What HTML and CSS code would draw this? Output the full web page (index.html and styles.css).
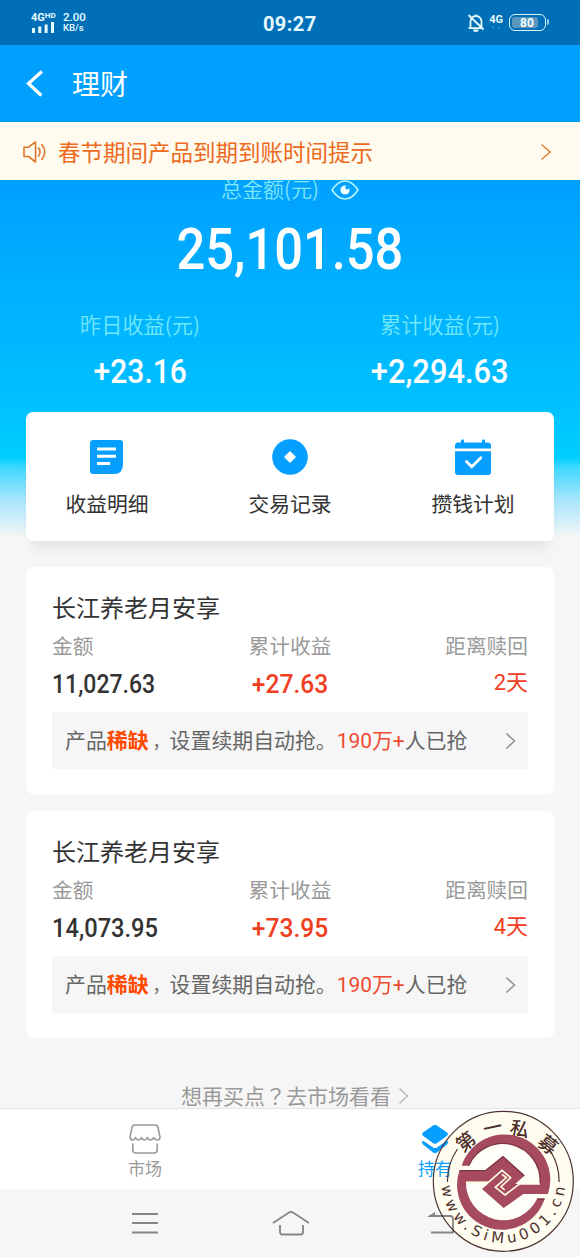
FILE: index.html
```html
<!DOCTYPE html>
<html lang="zh-CN">
<head>
<meta charset="utf-8">
<title>理财</title>
<link rel="stylesheet" href="styles.css">
</head>
<body>
<div class="screen">
  <div class="status">
    <div class="signal">
      <div class="net">4G<sup>HD</sup></div>
      <svg width="24" height="12" viewBox="0 0 24 12" fill="#e6fbff"><rect x="1" y="6" width="3" height="5"/><rect x="7.300" y="4.500" width="3" height="6.500"/><rect x="13.600" y="2.500" width="3" height="8.500"/><rect x="20" y="0" width="3" height="11"/></svg>
    </div>
    <div class="speed"><span>2.00</span><span class="unit">KB/s</span></div>
    <div class="clock">09:27</div>
    <div class="status-right">
      <svg width="18" height="20" viewBox="0 0 18 20" fill="none" stroke="#e6fbff" stroke-width="1.800"><path d="M3.500 15V8.500a5.500 5.500 0 0 1 11 0V15M1.500 15.200h14.500M8.700 3V1.500M1.500 2l15 14.500"/><path d="M6 16.500a2.800 2.500 0 0 0 5.600 0z" fill="#e6fbff" stroke="none"/></svg>
      <div class="net4g">4G<svg width="10" height="5" viewBox="0 0 10 5" fill="#0b94c4"><path d="M0 1h4l-2 3zM6 4h4l-2-3z"/></svg></div>
      <div class="battery"><div class="level">80</div></div>
    </div>
  </div>
  <div class="titlebar">
    <svg width="18" height="27" viewBox="0 0 18 27" fill="none" stroke="#fff" stroke-width="3.200"><path d="M15.800 1.500L2.500 13.500 15.300 25.500"/></svg>
    <h1>理财</h1>
  </div>
  <div class="notice">
    <svg width="24" height="22" viewBox="0 0 24 22" fill="none" stroke="#dc762b" stroke-width="1.600" stroke-linejoin="round"><path d="M1 6.200h4.500L12.500 1v20l-7-5.500H1zM15.500 7q3 4 0 8M18.800 3.500q6 7.500 0 15" stroke-linecap="round"/></svg>
    <span class="notice-text">春节期间产品到期到账时间提示</span>
    <svg width="12" height="18" viewBox="0 0 12 18" fill="none" stroke="#df863f" stroke-width="1.600"><path d="M1.500 1.500L10 9 1.500 16.500"/></svg>
  </div>
  <div class="hero">
    <div class="total-label"><span>总金额(元)</span>
      <svg width="28" height="20" viewBox="0 0 28 20"><path d="M1 10Q7 1 14 1t13 9Q21 19 14 19T1 10z" fill="none" stroke="#b2f4ff" stroke-width="1.600"/><circle cx="14" cy="10" r="4.600" fill="#f2ffff"/><circle cx="16.200" cy="7.500" r="1.900" fill="#03a5ff"/></svg>
    </div>
    <div class="total"><span>25,101.58</span></div>
    <div class="gains">
      <div class="gain"><div class="gain-label">昨日收益(元)</div><div class="gain-value"><span>+23.16</span></div></div>
      <div class="gain right"><div class="gain-label">累计收益(元)</div><div class="gain-value"><span>+2,294.63</span></div></div>
    </div>
    <div class="actions">
      <div class="action">
        <svg width="36" height="36" viewBox="0 0 36 36"><path d="M4 1h27q3 0 3 3v21q0 10-9 10H4q-3 0-3-3V4q0-3 3-3z" fill="#079fff"/><path d="M8 10h19M8 17.300h19M8 24.500h13" stroke="#fff" stroke-width="3"/></svg>
        <span>收益明细</span>
      </div>
      <div class="action">
        <svg width="36" height="36" viewBox="0 0 36 36"><circle cx="18" cy="18" r="17.800" fill="#079fff"/><path d="M18 12l6 6-6 6-6-6z" fill="#fff"/></svg>
        <span>交易记录</span>
      </div>
      <div class="action">
        <svg width="38" height="36" viewBox="0 0 38 36"><path d="M4 3.500h3V2q0-1.700 1.500-1.700T10 2v1.500h18V2q0-1.700 1.500-1.700T31 2v1.500h3q3 0 3 3V9.500H1V6.500q0-3 3-3zM1 12.300h36v20.700q0 3-3 3H4q-3 0-3-3z" fill="#079fff"/><path d="M12.500 22.500l5.300 5.300 9-9" fill="none" stroke="#fff" stroke-width="2.800" stroke-linecap="round"/></svg>
        <span>攒钱计划</span>
      </div>
    </div>
  </div>
  <div class="list">
    <div class="product">
      <h2>长江养老月安享</h2>
      <div class="labels"><span>金额</span><span>累计收益</span><span>距离赎回</span></div>
      <div class="values"><span class="num tight">11,027.63</span><span class="num red">+27.63</span><span class="days">2天</span></div>
      <div class="promo"><p>产品<b>稀缺</b><i>，</i>设置续期自动抢。<em>190万+</em>人已抢</p>
        <svg width="11" height="18" viewBox="0 0 11 18" fill="none" stroke="#969696" stroke-width="1.600"><path d="M1.300 1.500L9.500 9 1.300 16.500"/></svg></div>
    </div>
    <div class="product">
      <h2>长江养老月安享</h2>
      <div class="labels"><span>金额</span><span>累计收益</span><span>距离赎回</span></div>
      <div class="values"><span class="num">14,073.95</span><span class="num red">+73.95</span><span class="days">4天</span></div>
      <div class="promo"><p>产品<b>稀缺</b><i>，</i>设置续期自动抢。<em>190万+</em>人已抢</p>
        <svg width="11" height="18" viewBox="0 0 11 18" fill="none" stroke="#969696" stroke-width="1.600"><path d="M1.300 1.500L9.500 9 1.300 16.500"/></svg></div>
    </div>
    <div class="more"><span>想再买点<i lang="zh-TW">？</i>去市场看看</span>
      <svg width="11" height="18" viewBox="0 0 11 18" fill="none" stroke="#b5b5b5" stroke-width="1.300"><path d="M1.500 1.500L9.500 9 1.500 16.500"/></svg></div>
  </div>
  <div class="tabs">
    <div class="tab">
      <svg width="32" height="30" viewBox="0 0 32 30" fill="none" stroke="#999" stroke-width="1.600" stroke-linejoin="round" stroke-linecap="round"><path d="M6 1h20q2.500 0 3 2.500L31 13q0 3-2.500 3T25 13.500q-1.500 2.500-3.500 2.500T18.500 13.500q-1 2.500-3 2.500t-3-2.500q-1 2.500-3 2.500T6.500 13.500Q5.500 16 3.500 16T1 13L3 3.500Q3.500 1 6 1zM3.800 20v6q0 3 3 3h18.400q3 0 3-3v-6"/></svg>
      <span>市场</span>
    </div>
    <div class="tab active">
      <svg width="30" height="32" viewBox="0 0 30 32" fill="#079fff"><path d="M13 1.500q2-1.200 4 0l10.500 7.300q2.500 2 0 4L17 20.500q-2 1.200-4 0L2.500 12.800q-2.500-2 0-4z"/><path d="M1 18.500q1-1.200 3 .5l9 6q2 1.200 4 0l9-6q2-1.700 3-.5 0 2.500-1.500 3.500L17 30.500q-2 1.200-4 0L2.500 22Q1 21 1 18.500z"/></svg>
      <span>持有</span>
    </div>
  </div>
  <div class="nav">
    <svg width="28" height="24" viewBox="0 0 28 24" stroke="#858585" stroke-width="1.800"><path d="M1 3h26M1 12h26M1 21.500h26"/></svg>
    <svg width="38" height="26" viewBox="0 0 38 26" fill="none" stroke="#858585" stroke-width="1.800"><path d="M1 13L17 2.500q2-1 4 0L37 13M8 15v7q0 2.500 2.500 2.500h18Q31 24.500 31 22v-7"/></svg>
    <svg class="back" width="30" height="24" viewBox="0 0 30 24" fill="none" stroke="#858585" stroke-width="1.800"><path d="M3 5h21q3 0 3 3v13.500H5"/><path d="M1 5.900l8-5v5z" fill="#858585" stroke="none"/></svg>
  </div>
  <div class="seal-disc"></div>
  <svg class="seal" width="146" height="146" viewBox="0 0 146 146">
    <circle cx="71.300" cy="72.300" r="70" fill="none" stroke="#4e3430" stroke-width="1.200"/>
    <g fill="none" stroke="#4e3430" stroke-width="1.200"><path d="M15.500 73A56 56 0 0 1 25.500 40M127.100 73A56 56 0 0 0 119 43"/></g>
    <g class="seal-cn">
      <text transform="translate(33.700 32.500) rotate(-39)" x="-9.500" y="7">第</text>
      <text transform="translate(60.500 18.500) rotate(-12)" x="-9.500" y="7">一</text>
      <text transform="translate(87.800 20) rotate(12)" x="-9.500" y="7">私</text>
      <text transform="translate(116 35.500) rotate(38)" x="-9.500" y="7">募</text>
    </g>
    <path id="arc" d="M9.500 77A62 62 0 0 0 133.100 77" fill="none"/>
    <text class="seal-url"><textPath href="#arc" textLength="183">www.SiMu001.cn</textPath></text>
    <g transform="translate(24 25) scale(.3333)">
      <circle cx="142" cy="146" r="112" fill="#fffffa"/>
      <g fill="#a64a5f">
        <path d="M17 95A134 134 0 0 1 276 180H202L143 222 78 165 104 143 141 68 205 125 170 150H252A112 112 0 0 0 38 95z"/>
        <path d="M10 110H88L141 68 205 125 150 175 98 143H30A112 112 0 0 0 243 195H266A134 134 0 0 1 10 110z"/>
        <path d="M140 76L196 125 170 149 148 180 90 165 98 143 100 110z"/>
      </g>
      <path d="M10 110H88L141 68 205 125M243 195H266M38 95A112 112 0 0 1 252 150" fill="none" stroke="#7d3544" stroke-width="4"/>
      <g fill="none" stroke="#fffbe0" stroke-width="5"><path d="M30 145H97L138 109 164 131 135 158 146 168M252 150H190L147 183 118 160 151 131 138 121"/></g>
    </g>
  </svg>
</div>
</body>
</html>
```

FILE: styles.css
```css
* { box-sizing: border-box; }
body { margin: 0; font-family: "Noto Sans CJK SC", sans-serif; }
h1, h2, p { margin: 0; font-weight: 400; }
i, em { font-style: normal; }
svg { display: block; flex: none; }
.screen { position: relative; width: 580px; height: 1257px; overflow: hidden; background: #f6f6f6; display: flex; flex-direction: column; }

.status { height: 45px; flex: none; background: #006fb8; color: #e6fbff; display: grid; grid-template-columns: 31px 32px 150px 1fr auto; align-items: center; padding-right: 34px; font-family: Roboto, sans-serif; font-weight: 500; }
.signal { grid-column: 2; }
.net { font-size: 11px; line-height: 10px; font-weight: 700; height: 9px; white-space: nowrap; }
.net sup { font-size: 8px; line-height: 1; vertical-align: 3px; }
.signal svg { margin-top: 1px; }
.speed { display: flex; flex-direction: column; width: 40px; font-size: 11.500px; line-height: 11px; }
.speed .unit { font-size: 9.500px; line-height: 10px; }
.clock { font-size: 20px; line-height: 24px; font-weight: 700; letter-spacing: .4px; padding-left: 50px; margin-top: 2px; }
.status-right { display: flex; align-items: center; }
.net4g { font-size: 11px; line-height: 10px; font-weight: 700; margin: 0 6px 0 4px; }
.net4g svg { margin-left: 2px; }
.battery { position: relative; width: 37px; height: 17px; border: 1.500px solid #d9f8ff; border-radius: 6px; padding: 2px; }
.battery::after { content: ""; position: absolute; right: -4px; top: 4px; width: 2px; height: 6px; background: #9fd5ea; border-radius: 0 2px 2px 0; }
.level { height: 100%; width: 26px; background: #5b97bd; border-radius: 3px; color: #f3ffff; font-size: 12px; line-height: 12px; font-weight: 700; padding-left: 8px; }

.titlebar { height: 77px; flex: none; background: #00a0ff; color: #fff; display: flex; align-items: center; padding: 0 26px; gap: 28px; }
.titlebar h1 { font-size: 28px; line-height: 36px; margin-top: -1px; }
.notice { height: 58px; margin-top: 1px; flex: none; background: #fffbee; color: #ed6a1e; display: flex; align-items: center; padding: 0 28px 0 23px; }
.notice-text { flex: 1; font-size: 22.500px; line-height: 30px; margin-left: 11px; margin-top: -3px; }

.hero { height: 387px; flex: none; background: linear-gradient(#00a0ff 0, #00c0ff 221px, #00ceff 277px, #42d8ff 288px, #a5e5fc 319px, #f6f6f6 358px); padding: 0 26px; margin-top: -1px; }
.total-label { display: flex; align-items: center; height: 20px; gap: 12px; padding-left: 195px; color: #80e6f8; font-size: 21px; font-weight: 350; }
.total-label span { line-height: 20px; margin-top: -5px; }
.total { text-align: center; height: 93px; padding-top: 15px; margin-bottom: 20px; color: #fff; font: 500 58px/68px Roboto, sans-serif; }
.total span { display: inline-block; transform: scaleX(.873); }
.gain-value span { display: inline-block; transform: scaleX(.91); }
.right .gain-value span { transform: scaleX(.935); }
.gains { display: grid; grid-template-columns: 228px 372px; height: 99px; text-align: center; }
.gain-label { color: #72e8fa; font-size: 21.200px; font-weight: 350; line-height: 22px; }
.gain-value { color: #fff; font: 500 33px/40px Roboto, sans-serif; margin-top: 17px; }
.actions { height: 129px; background: #fff; border-radius: 7px; display: grid; grid-template-columns: 162px 204px 162px; box-shadow: 0 12px 14px -6px rgba(0,0,0,.09); }
.action { display: flex; flex-direction: column; align-items: center; padding-top: 27px; color: #333; font-size: 20.800px; line-height: 30px; gap: 13px; }

.list { height: 541px; flex: none; padding: 0 26px; overflow: hidden; }
.product { height: 227px; margin-bottom: 17px; background: #fff; border-radius: 7px; padding: 23px 26px 0; }
.product h2 { color: #333; font-size: 24px; line-height: 34px; }
.labels, .values { display: grid; grid-template-columns: 176px 124px 176px; }
.labels { color: #999; font-size: 20.700px; line-height: 30px; margin-top: 6px; }
.labels span:nth-child(2), .values span:nth-child(2) { text-align: center; }
.labels span:nth-child(3), .values span:nth-child(3) { text-align: right; }
.values { height: 40px; line-height: 40px; margin-top: 4px; color: #333; }
.num { font: 500 26px/40px Roboto, sans-serif; transform: scaleX(.91); transform-origin: left; }
.num.tight { transform: scaleX(.885); }
.num.red { transform: scaleX(.945); transform-origin: center; }
.red, .days { color: #f03e1e; }
.days { font-family: Roboto, "Noto Sans CJK SC", sans-serif; font-size: 22px; line-height: 37px; }
.promo { height: 57px; margin-top: 8px; background: #f6f6f6; color: #666; display: flex; align-items: center; justify-content: space-between; padding: 0 12px 0 13px; }
.promo p { font-family: Roboto, "Noto Sans CJK SC", sans-serif; font-size: 20.900px; line-height: 30px; white-space: nowrap; margin-top: 1px; }
.promo b { color: #ff4a00; font-weight: 700; }
.promo i { font-size: 17px; margin-left: 4px; }
.promo em { color: #f04a30; }
.more { display: flex; align-items: center; padding-left: 155px; gap: 7px; color: #999; font-size: 21px; line-height: 30px; margin-top: 43px; height: 30px; }
.more span { margin-top: -2px; }
.more i { font-family: "Noto Sans CJK TC", sans-serif; }

.tabs { height: 81px; flex: none; background: #fff; border-top: 1px solid #e4e4e4; display: grid; grid-template-columns: 1fr 1fr; }
.tab { display: flex; flex-direction: column; align-items: center; padding-top: 15px; color: #999; font-size: 17px; line-height: 24px; }
.tab svg { height: 30px; }
.tab.active { position: relative; z-index: 2; color: #079fff; }
.tab span { margin-top: 2px; }
.nav { height: 68px; flex: none; background: #f6f6f6; display: grid; grid-template-columns: 166px 126px 173px; justify-items: center; align-items: center; padding: 0 0 0 62px; }
.nav .back { position: relative; z-index: 2; }
.seal-disc { position: absolute; z-index: 1; left: 433px; top: 1111px; width: 140px; height: 140px; border-radius: 50%; background: #fffdf0; }
.seal { position: absolute; z-index: 3; left: 432px; top: 1109px; }
.seal-cn { font: 500 19px "Noto Sans CJK SC", sans-serif; fill: #4e302c; }
.seal-url { font: 400 15px "DejaVu Sans", sans-serif; fill: #4e302c; }
```
